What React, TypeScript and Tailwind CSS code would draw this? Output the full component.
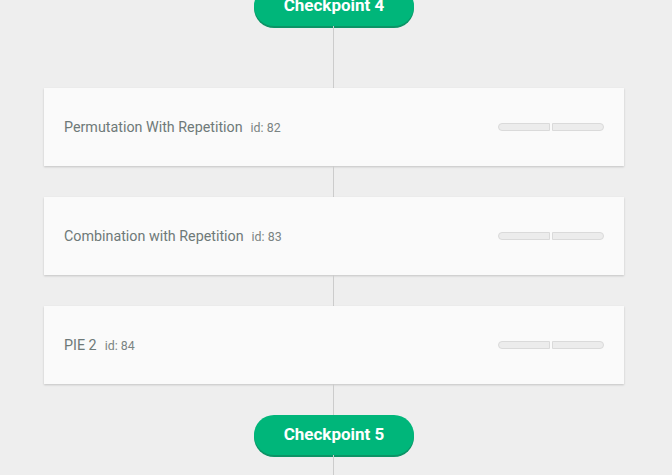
const lessons = [
  { title: "Permutation With Repetition", id: 82 },
  { title: "Combination with Repetition", id: 83 },
  { title: "PIE 2", id: 84 },
];

function Checkpoint({ label }: { label: string }) {
  return (
    <div className="flex h-[40px] w-[160px] items-center justify-center rounded-full bg-[#00b67a] text-[17px] font-bold text-white shadow-[0_2px_0_#0b9466]">
      {label}
    </div>
  );
}

function Line({ h }: { h: string }) {
  return <div className={`mr-px w-px bg-[#cccccc] ${h}`} />;
}

function LessonCard({ title, id }: { title: string; id: number }) {
  return (
    <div className="flex h-[78px] w-[580px] items-center justify-between bg-[#fafafa] px-5 shadow-[0_1px_2px_rgba(0,0,0,0.18)]">
      <div className="mt-[2px] flex items-baseline gap-2">
        <span className="text-[14.3px] text-[#6e7978]">{title}</span>
        <span className="text-[12.4px] text-[#7a8483]">id: {id}</span>
      </div>
      <div className="flex gap-[2px]">
        <div className="h-[8px] w-[52px] rounded-l-full border border-[#dadada] bg-[#ececec]" />
        <div className="h-[8px] w-[52px] rounded-r-full border border-[#dadada] bg-[#ececec]" />
      </div>
    </div>
  );
}

export default function App() {
  return (
    <div
      className="h-[475px] w-[672px] overflow-hidden bg-[#eeeeee]"
      style={{ fontFamily: "Roboto, 'Noto Sans', sans-serif" }}
    >
      <div className="mt-[-14px] ml-[44px] flex w-[580px] flex-col items-center">
        <Checkpoint label="Checkpoint 4" />
        <Line h="h-[62px]" />
        {lessons.map((l) => (
          <div key={l.id} className="flex flex-col items-center">
            <LessonCard title={l.title} id={l.id} />
            <Line h="h-[31px]" />
          </div>
        ))}
        <Checkpoint label="Checkpoint 5" />
        <Line h="h-[40px]" />
      </div>
    </div>
  );
}
